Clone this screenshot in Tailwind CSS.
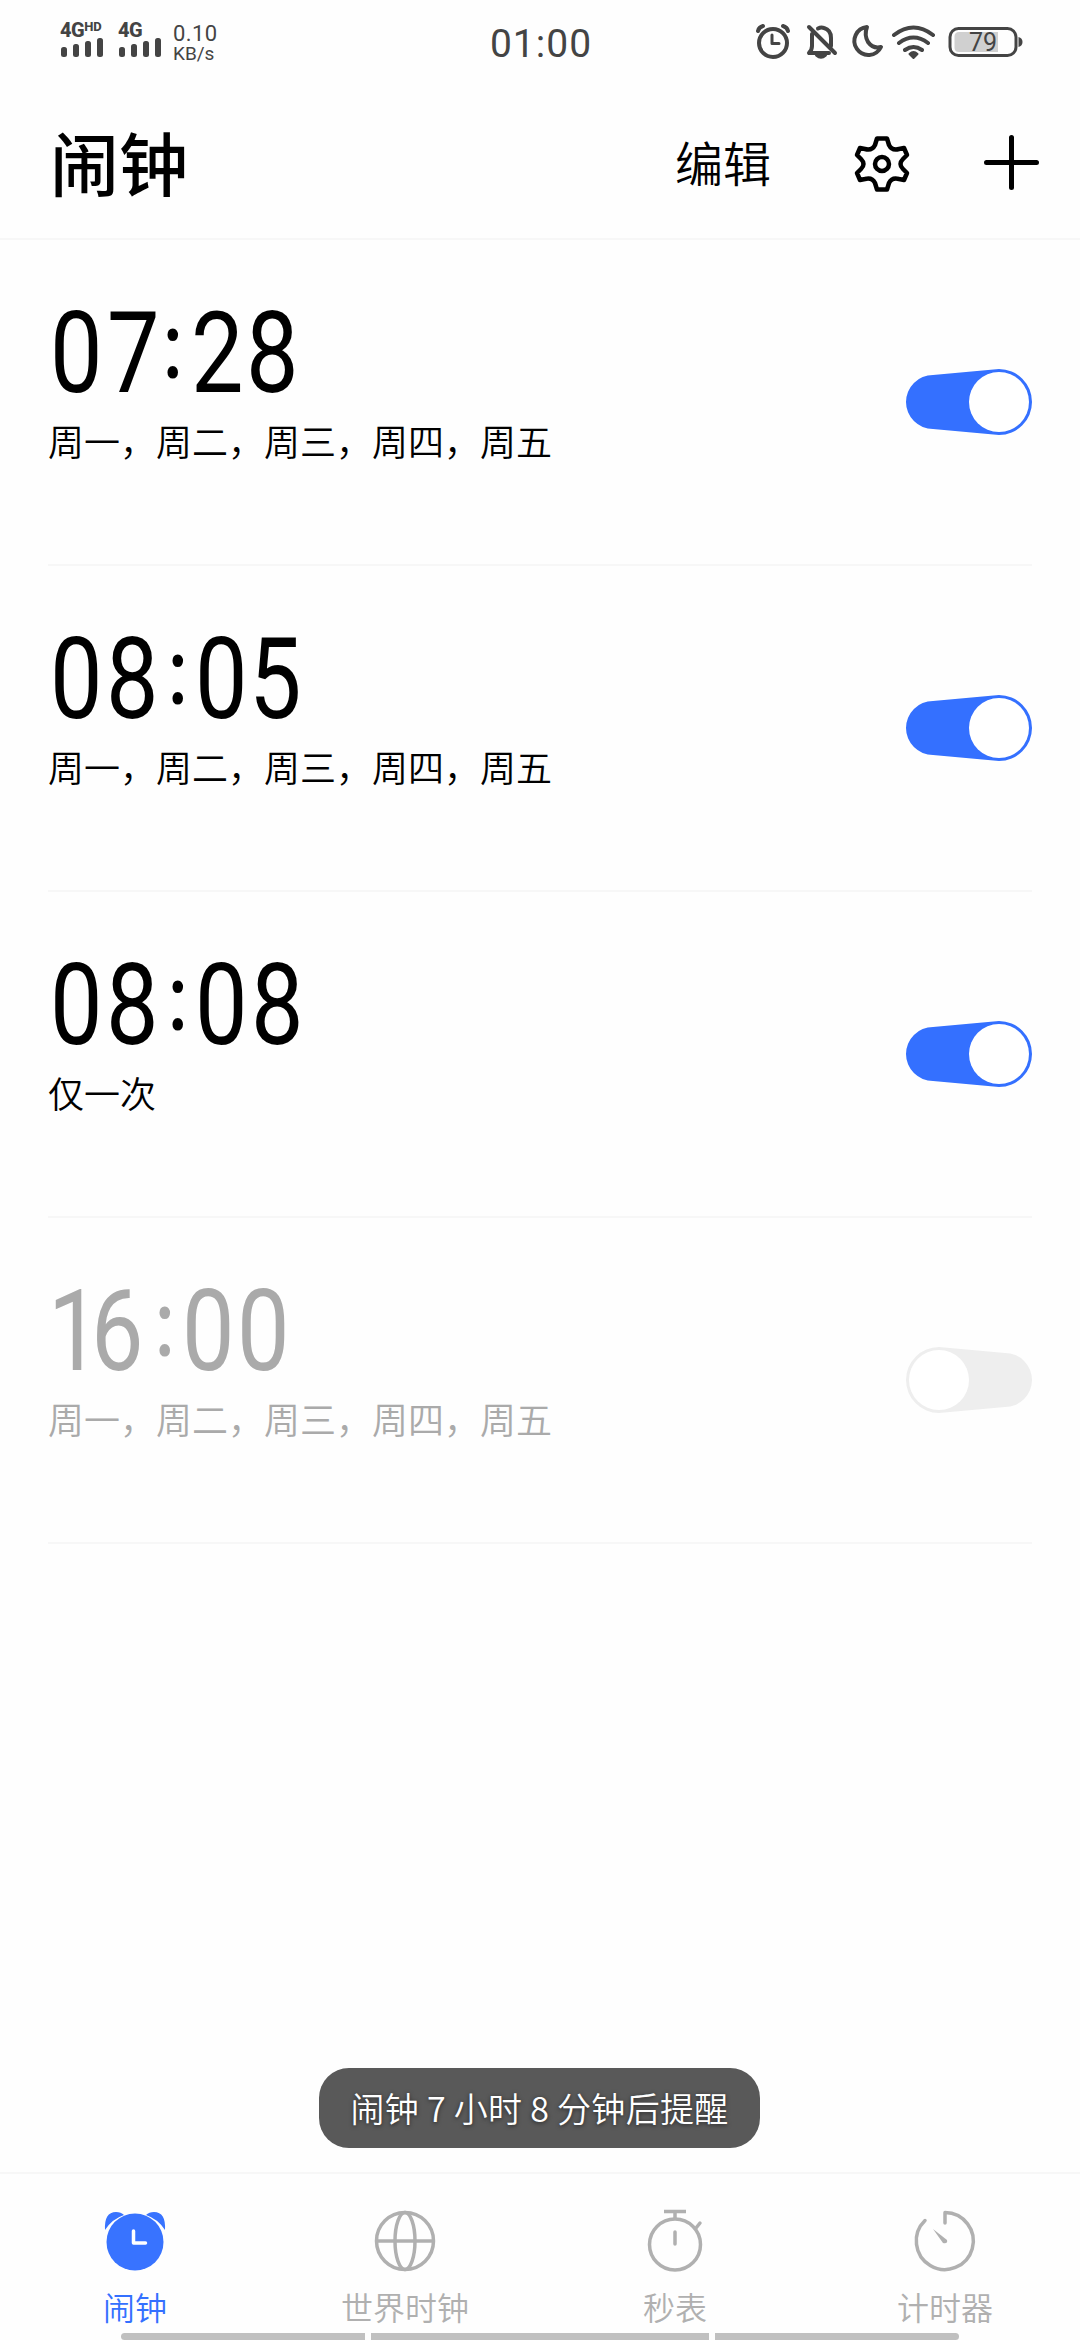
<!DOCTYPE html>
<html lang="zh-CN">
<head>
    <meta charset="UTF-8">
    <title>闹钟</title>
    <script src="https://cdn.jsdelivr.net/npm/@tailwindcss/browser@4"></script>
</head>

<body class="bg-[#fefefe]">
<div class="w-[1080px] h-[2340px] flex flex-col overflow-hidden relative text-black font-[Roboto,'Noto_Sans_CJK_SC',sans-serif]">

<!-- STATUS BAR -->
<div class="h-[84px] shrink-0 grid grid-cols-3 text-[#444]">
    <div class="flex pl-[60px] pt-[20px]">
        <div class="w-[58px]">
            <div class="flex h-[18px] text-[20px] leading-[20px] font-extrabold tracking-[-0.5px]">4G<span class="text-[13px] leading-[14px] tracking-normal">HD</span></div>
            <svg width="44" height="20" viewBox="0 0 44 20" fill="#444"><rect x="1" y="9" width="6" height="10" rx="2.5"/><rect x="13" y="6" width="6" height="13" rx="2.5"/><rect x="25" y="3" width="6" height="16" rx="2.5"/><rect x="37" y="0" width="6" height="19" rx="2.5"/></svg>
        </div>
        <div class="w-[55px]">
            <div class="h-[18px] text-[20px] leading-[20px] font-extrabold tracking-[-0.5px]">4G</div>
            <svg width="44" height="20" viewBox="0 0 44 20" fill="#444"><rect x="1" y="9" width="6" height="10" rx="2.5"/><rect x="13" y="6" width="6" height="13" rx="2.5"/><rect x="25" y="3" width="6" height="16" rx="2.5"/><rect x="37" y="0" width="6" height="19" rx="2.5"/></svg>
        </div>
        <div class="pt-[3px]">
            <div class="text-[22px] leading-[22px] tracking-[0.4px]">0.10</div>
            <div class="text-[19px] leading-[18px]">KB/s</div>
        </div>
    </div>
    <div class="text-center text-[39px] leading-[44px] pt-[22px] pl-[2px] tracking-[1px]">01:00</div>
    <div class="pt-[22px] flex justify-end pr-[57px]">
        <svg width="268" height="40" viewBox="0 0 268 40" fill="none" stroke="#444" stroke-width="4" stroke-linecap="round">
            <!-- alarm -->
            <circle cx="18" cy="21" r="14"/>
            <path d="M17 13v8.500h7" stroke-width="3" stroke-linejoin="round"/>
            <path d="M3 9Q4 5 8 4M28 4Q32 5 33 9" stroke-width="4"/>
            <!-- muted bell -->
            <path d="M57 12v12q0 4-3 7h20M63 6.500q3-1.500 6-.5 7 2 7 10v8" stroke-width="4" stroke-linejoin="round"/>
            <path d="M54 5l26 26" stroke-width="4"/>
            <path d="M62 33q4 3.500 8 0"/>
            <!-- moon -->
            <path d="M112 5a14 14 0 1 0 14 20q-8 2-13-5-4-7-1-15z" stroke-width="4" stroke-linejoin="round"/>
            <!-- wifi -->
            <path d="M139 13q19.500-15 39 0M144 21q14.500-11 29 0M150 28q8.500-6 17 0"/>
            <path d="M154.500 32q4-4 8 0l-4 4z" stroke-width="2" fill="#444" stroke-linejoin="round"/>
            <!-- battery -->
            <rect x="195" y="6.500" width="66" height="27" rx="8.500" stroke-width="3"/>
            <path d="M204 10h39v20h-39q-4.500 0-4.500-4.500v-11q0-4.500 4.500-4.500z" fill="#d0d0d0" stroke="none"/>
            <path d="M263.500 15q4 1 4 5t-4 5z" fill="#444" stroke="none"/>
            <text x="214" y="29" font-size="25" font-weight="400" fill="#444" stroke="none">79</text>
        </svg>
    </div>
</div>

<!-- HEADER -->
<div class="h-[156px] shrink-0 border-b-2 border-[#f7f7f7] flex justify-between pl-[50px] pr-[41px]">
    <h1 class="text-[69px] leading-[100px] pt-[27px] font-[450] font-['Noto_Sans_CJK_SC',sans-serif]">闹钟</h1>
    <div class="flex">
        <span class="text-[48px] leading-[70px] pt-[42px] mr-[81px] font-[350] font-['Noto_Sans_CJK_SC',sans-serif]">编辑</span>
        <svg class="mt-[50px] mr-[72px]" width="60" height="60" viewBox="-30 -30 60 60" fill="none" stroke="#000" stroke-width="4.500" stroke-linejoin="round">
            <circle r="7"/>
            <path d="M-5 -25.500H5L7 -19Q10 -13 17 -15L22 -16L25 -9L21 -5Q16 0 21 5L25 9L22 16L17 15Q10 13 7 19L5 25.500H-5L-7 19Q-10 13 -17 15L-22 16L-25 9L-21 5Q-16 0 -21 -5L-25 -9L-22 -16L-17 -15Q-10 -13 -7 -19Z"/>
        </svg>
        <svg class="mt-[51px]" width="55" height="55" viewBox="0 0 55 55" stroke="#000" stroke-width="5" stroke-linecap="round"><path d="M2.500 27.500h50M27.500 2.500v50"/></svg>
    </div>
</div>

<!-- ALARM LIST -->
<div id="alarmList" class="flex-1 px-[48px]"></div>

<!-- TOAST -->
<div class="absolute left-[319px] top-[2068px] w-[441px] h-[80px] rounded-[30px] bg-[#595959] text-white text-[34px] leading-[80px] text-center font-[350] tracking-[0.3px] whitespace-nowrap text-shadow-[0_1px_4px_rgb(0_0_0/0.6)] font-['Noto_Sans_CJK_SC',sans-serif]">闹钟 7 小时 8 分钟后提醒</div>

<!-- TAB BAR -->
<div class="h-[168px] shrink-0 border-t-2 border-[#f7f7f7] grid grid-cols-4 text-[32px] leading-[46px] font-[350] text-[#b0b0b0] font-['Noto_Sans_CJK_SC',sans-serif]">
    <div class="flex flex-col items-center pt-[32px] text-[#3470ff]">
        <svg width="70" height="70" viewBox="0 0 70 70" fill="#3873ff">
            <path d="M5 24Q4 6 16 6q5 0 8 3Q12 13 5 24zM65 24Q66 6 54 6q-5 0-8 3Q58 13 65 24z"/>
            <circle cx="35" cy="36" r="28.500"/>
            <path d="M33.500 25v12h12" fill="none" stroke="#fff" stroke-width="3.500" stroke-linecap="round" stroke-linejoin="round"/>
        </svg>
        <span class="mt-[7px]">闹钟</span>
    </div>
    <div class="flex flex-col items-center pt-[32px]">
        <svg width="70" height="70" viewBox="0 0 70 70" fill="none" stroke="#b0b0b0" stroke-width="3.500">
            <circle cx="35" cy="35" r="28.500"/>
            <ellipse cx="35" cy="35" rx="10" ry="28.500"/>
            <path d="M7 35h56"/>
        </svg>
        <span class="mt-[7px]">世界时钟</span>
    </div>
    <div class="flex flex-col items-center pt-[32px]">
        <svg width="70" height="70" viewBox="0 0 70 70" fill="none" stroke="#b0b0b0" stroke-width="3.500">
            <circle cx="35" cy="38.500" r="25.500"/>
            <path d="M24 5.500h22M35 6v7"/>
            <path d="M35 26v12M56 22l4-5" stroke-linecap="round"/>
        </svg>
        <span class="mt-[7px]">秒表</span>
    </div>
    <div class="flex flex-col items-center pt-[32px]">
        <svg width="70" height="70" viewBox="0 0 70 70" fill="none" stroke="#b0b0b0" stroke-width="3.500" stroke-linecap="round" stroke-linejoin="round">
            <path d="M35 17V6.500A28.500 28.500 0 1 1 15 14.500"/>
            <path d="M23 23l14 11q1 4-4 3z" fill="#b0b0b0" stroke="none"/>
        </svg>
        <span class="mt-[7px]">计时器</span>
    </div>
</div>

<!-- GESTURE BARS -->
<div class="absolute left-[121px] bottom-0 flex gap-[6px]">
    <div class="w-[244px] h-[7px] bg-[#c0c0c0] rounded-l-[4px]"></div>
    <div class="w-[338px] h-[7px] bg-[#c0c0c0]"></div>
    <div class="w-[244px] h-[7px] bg-[#c0c0c0] rounded-r-[4px]"></div>
</div>

</div>

<script>

const weekdays = "周一，周二，周三，周四，周五";

/* x: start of each character of the time */
const alarms = [
    { time: "07:28", repeat: weekdays, on: true, x: [2, 59, 116, 143, 198] },
    { time: "08:05", repeat: weekdays, on: true, x: [2, 58, 121, 147, 201] },
    { time: "08:08", repeat: "仅一次", on: true, x: [2, 58, 121, 147, 203] },
    { time: "16:00", repeat: weekdays, on: false, x: [0, 43, 108, 134, 189] }
];

/* SWITCH */
function createSwitch(on) {
    return `
        <svg class="mt-[127px] mr-[-2px]" width="130" height="70" viewBox="0 0 130 70">
            <g transform="${on ? "" : "translate(130 0) scale(-1 1)"}">
                <path d="M29 8L95 2A33 33 0 0 1 95 68L29 62A27 27 0 0 1 29 8z" fill="${on ? "#3470ff" : "#eee"}"/>
                <circle cx="95" cy="35" r="30" fill="#fff"/>
            </g>
        </svg>`;
}

/* TIME, the colon is smaller and raised */
function createTime(a) {
    const [h, m] = a.time.split(":");
    const xs = a.x.map(x => x / 0.82).join(" ");
    return `
        <svg class="overflow-visible" width="300" height="120" fill="currentColor" font-size="114">
            <text transform="scale(0.82 1)" x="${xs}" y="102">${h}<tspan font-size="88" dy="-16" stroke="currentColor" stroke-width="3">:</tspan><tspan dy="16">${m}</tspan></text>
        </svg>`;
}

/* ALARM ROWS */
document.getElementById("alarmList").innerHTML = alarms.map(a => `
    <div class="h-[326px] flex justify-between border-b-2 border-[#f7f7f7] ${a.on ? "text-black" : "text-[#aaa]"}">
        <div class="pt-[50px]">
            ${createTime(a)}
            <p class="text-[36px] leading-[52px] mt-[4px] font-[350] font-['Noto_Sans_CJK_SC',sans-serif]">${a.repeat}</p>
        </div>
        ${createSwitch(a.on)}
    </div>
`).join("");

</script>

</body>
</html>
